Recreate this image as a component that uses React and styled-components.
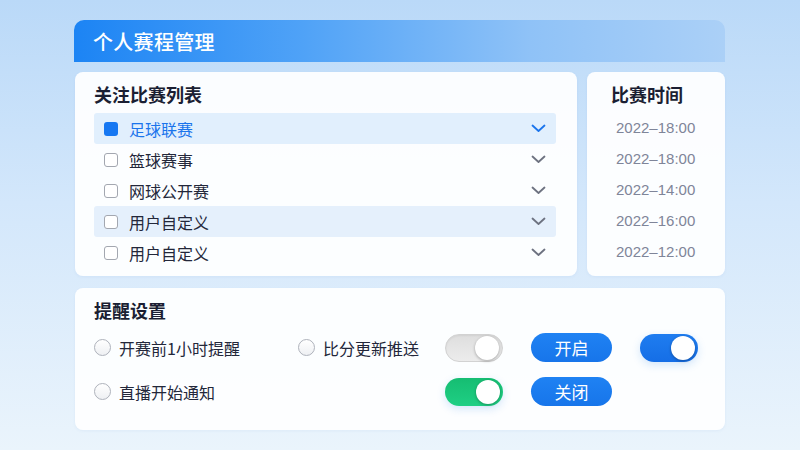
import React from "react";
import styled, { createGlobalStyle } from "styled-components";

const Global = createGlobalStyle`
  html, body { margin: 0; padding: 0; }
  body {
    width: 800px;
    height: 450px;
    overflow: hidden;
    font-family: "Noto Sans CJK SC", "Noto Sans", sans-serif;
    background: linear-gradient(180deg, #bad9f8 0%, #d3e7fb 45%, #eaf4fc 100%);
  }
`;

const Page = styled.div`
  width: 651px;
  padding: 20px 0 0 74px;
  display: flex;
  flex-direction: column;
`;

const Header = styled.div`
  height: 42px;
  border-radius: 10px 10px 0 0;
  background: linear-gradient(90deg, #1c84f4 0%, #4fa2f7 35%, #8fc2f7 70%, #abd0f7 100%);
  display: flex;
  align-items: center;
  padding-left: 19px;
  color: #fff;
  font-size: 20px;
  font-weight: 500;
  letter-spacing: 0.3px;
`;

const TopRow = styled.div`
  display: flex;
  gap: 10px;
  margin-top: 10px;
  padding-left: 1px;
`;

const Card = styled.div`
  background: rgba(253, 254, 255, 0.97);
  border-radius: 8px;
  box-shadow: 0 1px 3px rgba(90, 140, 200, 0.08);
  box-sizing: border-box;
  width: ${(p) => p.$w}px;
  height: ${(p) => p.$h}px;
  padding: 10px ${(p) => p.$pr || 0}px 0 ${(p) => p.$pl}px;
  display: flex;
  flex-direction: column;
`;

const Title = styled.div`
  font-size: 18px;
  font-weight: 700;
  line-height: 24px;
  color: #1b1f33;
  margin-bottom: ${(p) => p.$mb}px;
`;

const ListRow = styled.div`
  height: 31px;
  box-sizing: border-box;
  display: flex;
  align-items: center;
  padding: 0 10px;
  border-radius: 3px;
  background: ${(p) => (p.$hl ? (p.$active ? "#e1effd" : "#e5f0fc") : "transparent")};
`;

const Check = styled.span`
  width: 14px;
  height: 14px;
  box-sizing: border-box;
  border-radius: 3px;
  border: ${(p) => (p.$on ? "none" : "1.5px solid #a3a7b0")};
  background: ${(p) => (p.$on ? "#1677f2" : "#fff")};
  flex: none;
`;

const RowText = styled.span`
  margin-left: 11px;
  font-size: 16px;
  color: ${(p) => (p.$active ? "#1a74ec" : "#23273a")};
  flex: 1;
`;

const Chevron = styled.svg`
  width: 15px;
  height: 9px;
  flex: none;
`;

const TimeRow = styled.div`
  height: 31px;
  display: flex;
  align-items: center;
  padding-left: 5px;
  font-family: "Liberation Sans", Arial, sans-serif;
  font-size: 15px;
  color: #7f8599;
`;

const Settings = styled(Card)`
  margin-top: 12px;
  margin-left: 1px;
`;

const Grid = styled.div`
  display: grid;
  grid-template-columns: 204px 147px 86px 109px 59px;
  grid-auto-rows: 29px;
  row-gap: 15px;
  align-items: center;
`;

const Option = styled.div`
  display: flex;
  align-items: center;
  font-size: 16px;
  color: #23273a;
  grid-column: ${(p) => p.$col};
`;

const Radio = styled.span`
  width: 17px;
  height: 17px;
  box-sizing: border-box;
  border-radius: 50%;
  border: 1px solid #aeb2bb;
  background: linear-gradient(180deg, #ffffff 0%, #eef0f3 100%);
  margin-right: 8px;
  flex: none;
`;

const tracks = {
  gray: "linear-gradient(180deg, #dedede 0%, #ececec 100%)",
  blue: "linear-gradient(180deg, #1f7df0 0%, #156ee6 100%)",
  green: "linear-gradient(180deg, #16bd72 0%, #1fcf84 100%)",
};

const Toggle = styled.span`
  grid-column: ${(p) => p.$col};
  position: relative;
  width: 58px;
  height: 28px;
  box-sizing: border-box;
  border-radius: 14px;
  background: ${(p) => tracks[p.$tone]};
  border: ${(p) => (p.$tone === "gray" ? "1px solid #d2d2d2" : "none")};
  box-shadow: ${(p) =>
    p.$tone === "gray" ? "inset 0 1px 2px rgba(0,0,0,0.06)" : "0 3px 8px rgba(30,120,230,0.18)"};
`;

const Knob = styled.span`
  position: absolute;
  top: 50%;
  right: 3px;
  width: 24px;
  height: 24px;
  margin-top: -12px;
  border-radius: 50%;
  background: #fff;
  box-shadow: 0 1px 3px rgba(0, 0, 0, 0.3);
`;

const Button = styled.button`
  grid-column: 4;
  width: 81px;
  height: 29px;
  border: none;
  border-radius: 15px;
  background: linear-gradient(180deg, #1f82f3 0%, #1775ea 100%);
  color: #fff;
  font-family: "Noto Sans CJK SC", sans-serif;
  font-size: 17px;
  padding: 0;
  display: flex;
  align-items: center;
  justify-content: center;
`;

const ChevronIcon = ({ color }) => (
  <Chevron viewBox="0 0 15 9">
    <path d="M1.5 1.5 L7.5 7 L13.5 1.5" fill="none" stroke={color} strokeWidth="1.8" strokeLinecap="round" strokeLinejoin="round" />
  </Chevron>
);

const matches = [
  { name: "足球联赛", hl: true, on: true },
  { name: "篮球赛事" },
  { name: "网球公开赛" },
  { name: "用户自定义", hl: true },
  { name: "用户自定义" },
];

const times = ["2022–18:00", "2022–18:00", "2022–14:00", "2022–16:00", "2022–12:00"];

export default function App() {
  return (
    <>
      <Global />
      <Page>
        <Header>个人赛程管理</Header>
        <TopRow>
          <Card $w={502} $h={204} $pl={19} $pr={21}>
            <Title $mb={7}>关注比赛列表</Title>
            {matches.map((m, i) => (
              <ListRow key={i} $hl={m.hl} $active={m.on}>
                <Check $on={m.on} />
                <RowText $active={m.on}>{m.name}</RowText>
                <ChevronIcon color={m.on ? "#1a74ec" : "#6d7280"} />
              </ListRow>
            ))}
          </Card>
          <Card $w={138} $h={204} $pl={24}>
            <Title $mb={6}>比赛时间</Title>
            {times.map((t, i) => (
              <TimeRow key={i}>{t}</TimeRow>
            ))}
          </Card>
        </TopRow>
        <Settings $w={650} $h={142} $pl={19}>
          <Title $mb={11}>提醒设置</Title>
          <Grid>
            <Option $col={1}>
              <Radio />
              开赛前1小时提醒
            </Option>
            <Option $col={2}>
              <Radio />
              比分更新推送
            </Option>
            <Toggle $col={3} $tone="gray">
              <Knob />
            </Toggle>
            <Button>开启</Button>
            <Toggle $col={5} $tone="blue">
              <Knob />
            </Toggle>
            <Option $col={1}>
              <Radio />
              直播开始通知
            </Option>
            <Toggle $col={3} $tone="green">
              <Knob />
            </Toggle>
            <Button>关闭</Button>
          </Grid>
        </Settings>
      </Page>
    </>
  );
}
